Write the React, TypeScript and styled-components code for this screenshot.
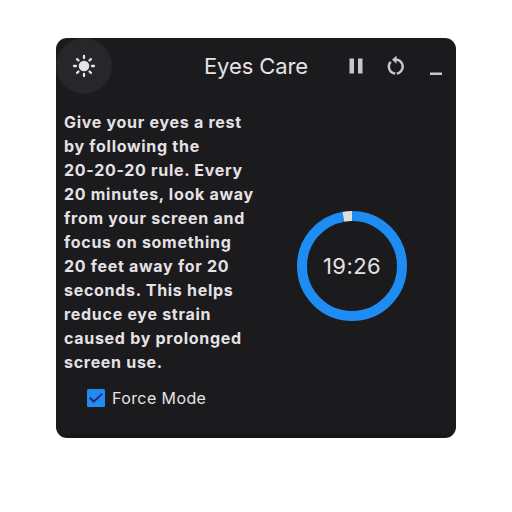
import React from "react";
import styled, { createGlobalStyle } from "styled-components";

const GlobalStyle = createGlobalStyle`
  * { box-sizing: border-box; }
  body { margin: 0; background: #fff; font-family: Inter, "Liberation Sans", sans-serif; }
`;

const Page = styled.div`
  height: 512px;
  padding: 38px 56px;
`;

const Window = styled.main`
  width: 400px;
  height: 400px;
  border-radius: 11px;
  overflow: hidden;
  background: linear-gradient(#1b1b1d 396px, #171719 396px);
  color: #e6e1e5;
  display: flex;
  flex-direction: column;
`;

const TitleBar = styled.header`
  display: grid;
  grid-template-columns: 56px 1fr 40px 40px 40px;
  height: 56px;
  align-items: center;
`;

const IconButton = styled.button<{ $round?: boolean }>`
  display: flex;
  align-items: center;
  justify-content: center;
  width: ${(p) => (p.$round ? 56 : 40)}px;
  height: ${(p) => (p.$round ? 56 : 40)}px;
  border: 0;
  padding: 0;
  border-radius: 50%;
  background: ${(p) => (p.$round ? "#272729" : "transparent")};
  color: ${(p) => (p.$round ? "#e6e1e5" : "#cac4d0")};
`;

const Title = styled.h1`
  margin: 0;
  padding-left: 92px;
  font-size: 22px;
  font-weight: 400;
  line-height: 28px;
  letter-spacing: -0.1px;
  white-space: nowrap;
`;

const Content = styled.div`
  display: flex;
  padding-top: 16px;
`;

const InfoColumn = styled.section`
  width: 192px;
  padding-left: 8px;
`;

const Advice = styled.p`
  margin: 0;
  font-size: 16px;
  line-height: 24px;
  font-weight: 700;
  letter-spacing: 0.71px;
  white-space: pre;
`;

const Option = styled.label`
  display: flex;
  align-items: center;
  gap: 7px;
  height: 24px;
  margin: 12px 0 0 23px;
  font-size: 16px;
  letter-spacing: 0.4px;
  white-space: nowrap;
`;

const TimerColumn = styled.section`
  flex: 1;
  display: flex;
  justify-content: center;
  padding: 101px 0 0 0;
`;

const Dial = styled.div`
  display: grid;
  width: 110px;
  height: 110px;
  place-items: center;
  > * { grid-area: 1 / 1; }
`;

const Time = styled.span`
  font-size: 22px;
  line-height: 28px;
  letter-spacing: 0.4px;
`;

const SunIcon = () => (
  <svg width="24" height="24" viewBox="0 0 24 24" stroke="currentColor" strokeWidth="2.3" strokeLinecap="round">
    <circle cx="12" cy="12" r="5.3" fill="currentColor" stroke="none" />
    <path d="M12 2v2M12 20v2M2 12h2M20 12h2M5.1 5.1l1.4 1.4M17.5 17.5l1.4 1.4M5.1 18.9l1.4-1.4M17.5 6.5l1.4-1.4" />
  </svg>
);

const PauseIcon = () => (
  <svg width="24" height="24" viewBox="0 0 24 24" fill="currentColor">
    <path d="M5.5 4.5H10v15H5.5zM14 4.5h4.5v15H14z" />
  </svg>
);

const RestartIcon = () => (
  <svg width="24" height="24" viewBox="0 0 24 24" fill="none" stroke="currentColor" strokeWidth="2.5">
    <path d="M11.2 19.6A7.1 7.1 0 0 1 6.7 7.8M12.8 19.6A7.1 7.1 0 0 0 12 5.5" />
    <path d="M12.5 1.5v8.3L8 5.7z" fill="currentColor" stroke="none" />
  </svg>
);

const MinimizeIcon = () => (
  <svg width="24" height="24" viewBox="0 0 24 24" fill="currentColor">
    <path d="M6 18.5h12V21H6z" />
  </svg>
);

const CheckedBox = () => (
  <svg width="18" height="18" viewBox="0 0 18 18">
    <rect width="18" height="18" rx="1.5" fill="#1f8cf3" />
    <path d="M2.8 8.7 6.8 12.7 15.2 4.6" fill="none" stroke="#381e72" strokeWidth="2" />
  </svg>
);

const Ring = () => (
  <svg width="110" height="110" viewBox="0 0 110 110" fill="none" strokeWidth="10">
    <circle cx="55" cy="55" r="50" stroke="#dedede" pathLength="1200" strokeDasharray="35 1165" strokeDashoffset="35" transform="rotate(-90 55 55)" />
    <circle cx="55" cy="55" r="50" stroke="#1f8cf3" pathLength="1200" strokeDasharray="1167 33" transform="rotate(-90 55 55)" />
  </svg>
);

const advice = `Give your eyes a rest
by following the
20-20-20 rule. Every
20 minutes, look away
from your screen and
focus on something
20 feet away for 20
seconds. This helps
reduce eye strain
caused by prolonged
screen use.`;

export default function App() {
  return (
    <Page>
      <GlobalStyle />
      <Window>
        <TitleBar>
          <IconButton $round aria-label="Toggle theme"><SunIcon /></IconButton>
          <Title>Eyes Care</Title>
          <IconButton aria-label="Pause"><PauseIcon /></IconButton>
          <IconButton aria-label="Restart"><RestartIcon /></IconButton>
          <IconButton aria-label="Minimize"><MinimizeIcon /></IconButton>
        </TitleBar>
        <Content>
          <InfoColumn>
            <Advice>{advice}</Advice>
            <Option><CheckedBox />Force Mode</Option>
          </InfoColumn>
          <TimerColumn>
            <Dial><Ring /><Time>19:26</Time></Dial>
          </TimerColumn>
        </Content>
      </Window>
    </Page>
  );
}
